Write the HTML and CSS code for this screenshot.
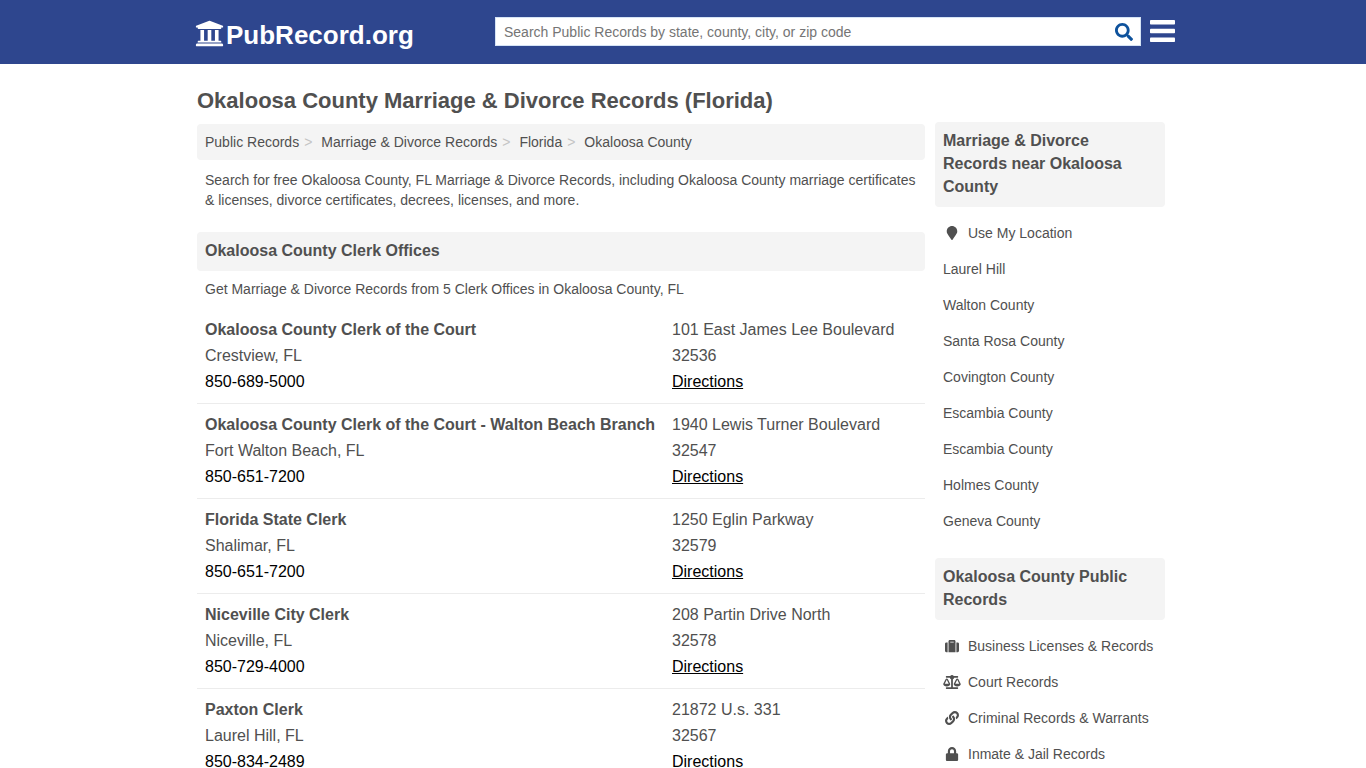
FILE: index.html
```html
<!DOCTYPE html>
<html lang="en">
<head>
<meta charset="utf-8">
<meta name="viewport" content="width=device-width, initial-scale=1">
<title>Okaloosa County Marriage &amp; Divorce Records (Florida)</title>
<link rel="stylesheet" href="styles.css">
</head>
<body>
<header class="site-header">
  <div class="container header-inner">
    <a class="logo" href="#">
      <svg class="logo-icon" viewBox="0 0 512 512" aria-hidden="true"><path d="M496 128v16a8 8 0 0 1-8 8h-24v12c0 6.627-5.373 12-12 12H60c-6.627 0-12-5.373-12-12v-12H24a8 8 0 0 1-8-8v-16a8 8 0 0 1 4.941-7.392l232-88a7.996 7.996 0 0 1 6.118 0l232 88A8 8 0 0 1 496 128zm-24 304H40c-13.255 0-24 10.745-24 24v16a8 8 0 0 0 8 8h464a8 8 0 0 0 8-8v-16c0-13.255-10.745-24-24-24zM96 192v192H60c-6.627 0-12 5.373-12 12v20h416v-20c0-6.627-5.373-12-12-12h-36V192h-64v192h-64V192h-64v192h-64V192H96z"/></svg>
      <span>PubRecord.org</span>
    </a>
    <form class="search" role="search">
      <input class="search-input" type="text" aria-label="Search public records" placeholder="Search Public Records by state, county, city, or zip code">
      <button class="search-button" type="button" aria-label="Search">
        <svg class="search-icon" viewBox="0 0 512 512" aria-hidden="true"><path d="M505 442.7L405.3 343c-4.5-4.5-10.6-7-17-7H372c27.6-35.3 44-79.7 44-128C416 93.1 322.9 0 208 0S0 93.1 0 208s93.1 208 208 208c48.3 0 92.7-16.4 128-44v16.3c0 6.4 2.5 12.5 7 17l99.7 99.7c9.4 9.4 24.6 9.4 33.9 0l28.3-28.3c9.4-9.4 9.4-24.6.1-34zM208 336c-70.7 0-128-57.2-128-128 0-70.7 57.2-128 128-128 70.7 0 128 57.2 128 128 0 70.7-57.2 128-128 128z"/></svg>
      </button>
    </form>
    <button class="menu-button" type="button" aria-label="Menu">
      <svg class="menu-icon" viewBox="0 0 25 22" aria-hidden="true"><rect width="25" height="4.6" rx=".8"/><rect y="8.7" width="25" height="4.6" rx=".8"/><rect y="17.4" width="25" height="4.6" rx=".8"/></svg>
    </button>
  </div>
</header>

<div class="container page">
  <main class="main">
    <h1 class="page-title">Okaloosa County Marriage &amp; Divorce Records (Florida)</h1>
    <nav aria-label="Breadcrumb">
      <ol class="breadcrumb">
        <li><a href="#">Public Records</a></li>
        <li><a href="#">Marriage &amp; Divorce Records</a></li>
        <li><a href="#">Florida</a></li>
        <li><a href="#">Okaloosa County</a></li>
      </ol>
    </nav>
    <p class="intro">Search for free Okaloosa County, FL Marriage &amp; Divorce Records, including Okaloosa County marriage certificates &amp; licenses, divorce certificates, decrees, licenses, and more.</p>
    <section class="offices">
      <h2 class="section-title">Okaloosa County Clerk Offices</h2>
      <p class="intro">Get Marriage &amp; Divorce Records from 5 Clerk Offices in Okaloosa County, FL</p>
      <ul class="office-list">
        <li class="office">
          <div><strong>Okaloosa County Clerk of the Court</strong><span>Crestview, FL</span><a class="phone" href="tel:850-689-5000">850-689-5000</a></div>
          <div><span>101 East James Lee Boulevard</span><span>32536</span><a class="directions" href="#">Directions</a></div>
        </li>
        <li class="office">
          <div><strong>Okaloosa County Clerk of the Court - Walton Beach Branch</strong><span>Fort Walton Beach, FL</span><a class="phone" href="tel:850-651-7200">850-651-7200</a></div>
          <div><span>1940 Lewis Turner Boulevard</span><span>32547</span><a class="directions" href="#">Directions</a></div>
        </li>
        <li class="office">
          <div><strong>Florida State Clerk</strong><span>Shalimar, FL</span><a class="phone" href="tel:850-651-7200">850-651-7200</a></div>
          <div><span>1250 Eglin Parkway</span><span>32579</span><a class="directions" href="#">Directions</a></div>
        </li>
        <li class="office">
          <div><strong>Niceville City Clerk</strong><span>Niceville, FL</span><a class="phone" href="tel:850-729-4000">850-729-4000</a></div>
          <div><span>208 Partin Drive North</span><span>32578</span><a class="directions" href="#">Directions</a></div>
        </li>
        <li class="office">
          <div><strong>Paxton Clerk</strong><span>Laurel Hill, FL</span><a class="phone" href="tel:850-834-2489">850-834-2489</a></div>
          <div><span>21872 U.s. 331</span><span>32567</span><a class="directions" href="#">Directions</a></div>
        </li>
      </ul>
    </section>
  </main>

  <aside class="sidebar">
    <section>
      <h2 class="section-title">Marriage &amp; Divorce Records near Okaloosa County</h2>
      <ul class="side-list">
        <li><a href="#"><svg class="side-icon" viewBox="0 0 384 512" aria-hidden="true"><path d="M172.268 501.67C26.97 291.031 0 269.413 0 192 0 85.961 85.961 0 192 0s192 85.961 192 192c0 77.413-26.97 99.031-172.268 309.67-9.535 13.774-29.93 13.773-39.464 0z"/></svg>Use My Location</a></li>
        <li><a href="#">Laurel Hill</a></li>
        <li><a href="#">Walton County</a></li>
        <li><a href="#">Santa Rosa County</a></li>
        <li><a href="#">Covington County</a></li>
        <li><a href="#">Escambia County</a></li>
        <li><a href="#">Escambia County</a></li>
        <li><a href="#">Holmes County</a></li>
        <li><a href="#">Geneva County</a></li>
      </ul>
    </section>
    <section>
      <h2 class="section-title">Okaloosa County Public Records</h2>
      <ul class="side-list">
        <li><a href="#"><svg class="side-icon" viewBox="0 0 512 512" aria-hidden="true"><path d="M128 480h256V80c0-26.500-21.500-48-48-48H176c-26.500 0-48 21.500-48 48v400zm64-384h128v32H192V96zm320 80v256c0 26.500-21.500 48-48 48h-48V128h48c26.500 0 48 21.500 48 48zM96 480H48c-26.500 0-48-21.500-48-48V176c0-26.500 21.500-48 48-48h48v352z"/></svg>Business Licenses &amp; Records</a></li>
        <li><a href="#"><svg class="side-icon" viewBox="0 0 640 512" aria-hidden="true"><path d="M256 336h-.02c0-16.18 1.34-8.73-85.05-181.51-17.65-35.29-68.19-35.36-85.87 0C-2.06 328.75.02 320.33.02 336H0c0 44.18 57.31 80 128 80s128-35.82 128-80zM128 176l72 144H56l72-144zm511.98 160c0-16.18 1.34-8.73-85.05-181.51-17.65-35.29-68.19-35.36-85.87 0-87.12 174.26-85.04 165.84-85.04 181.51H384c0 44.18 57.31 80 128 80s128-35.82 128-80h-.02zM440 320l72-144 72 144H440zm88 128H352V153.25c23.51-10.29 41.16-31.48 46.39-57.25H528c8.84 0 16-7.16 16-16V48c0-8.84-7.16-16-16-16H383.64C369.04 12.68 346.09 0 320 0s-49.04 12.68-63.64 32H112c-8.84 0-16 7.16-16 16v32c0 8.84 7.16 16 16 16h129.61c5.23 25.76 22.87 46.96 46.39 57.25V448H112c-8.84 0-16 7.16-16 16v32c0 8.84 7.16 16 16 16h416c8.84 0 16-7.16 16-16v-32c0-8.84-7.16-16-16-16z"/></svg>Court Records</a></li>
        <li><a href="#"><svg class="side-icon" viewBox="0 0 512 512" aria-hidden="true"><path d="M326.612 185.391c59.747 59.809 58.927 155.698.36 214.59-.11.12-.24.25-.36.37l-67.2 67.2c-59.27 59.27-155.699 59.262-214.96 0-59.27-59.26-59.27-155.7 0-214.96l37.106-37.106c9.84-9.84 26.786-3.3 27.294 10.606.648 17.722 3.826 35.527 9.69 52.721 1.986 5.822.567 12.262-3.783 16.612l-13.087 13.087c-28.026 28.026-28.905 73.66-1.155 101.96 28.024 28.579 74.086 28.749 102.325.51l67.2-67.19c28.191-28.191 28.073-73.757 0-101.83-3.701-3.694-7.429-6.564-10.341-8.569a16.037 16.037 0 0 1-6.947-12.606c-.396-10.567 3.348-21.456 11.698-29.806l21.054-21.055c5.521-5.521 14.182-6.199 20.584-1.731a152.482 152.482 0 0 1 20.522 17.197zM467.547 44.449c-59.261-59.262-155.69-59.27-214.96 0l-67.2 67.2c-.12.12-.25.25-.36.37-58.566 58.892-59.387 154.781.36 214.59a152.454 152.454 0 0 0 20.521 17.196c6.402 4.468 15.064 3.789 20.584-1.731l21.054-21.055c8.35-8.35 12.094-19.239 11.698-29.806a16.037 16.037 0 0 0-6.947-12.606c-2.912-2.005-6.64-4.875-10.341-8.569-28.073-28.073-28.191-73.639 0-101.83l67.2-67.19c28.239-28.239 74.3-28.069 102.325.51 27.75 28.3 26.872 73.934-1.155 101.96l-13.087 13.087c-4.35 4.35-5.769 10.79-3.783 16.612 5.864 17.194 9.042 34.999 9.69 52.721.509 13.906 17.454 20.446 27.294 10.606l37.106-37.106c59.271-59.259 59.271-155.699.001-214.959z"/></svg>Criminal Records &amp; Warrants</a></li>
        <li><a href="#"><svg class="side-icon" viewBox="0 0 448 512" aria-hidden="true"><path d="M400 224h-24v-72C376 68.2 307.8 0 224 0S72 68.2 72 152v72H48c-26.500 0-48 21.500-48 48v192c0 26.500 21.500 48 48 48h352c26.500 0 48-21.500 48-48V272c0-26.500-21.500-48-48-48zm-104 0H152v-72c0-39.700 32.300-72 72-72s72 32.300 72 72v72z"/></svg>Inmate &amp; Jail Records</a></li>
      </ul>
    </section>
  </aside>
</div>
</body>
</html>
```
FILE: styles.css
```css
* {
  box-sizing: border-box;
}

body {
  margin: 0;
  background: #fff;
  color: #505050;
  font-family: "Liberation Sans", Arial, sans-serif;
  font-size: 14px;
  line-height: 20px;
}

h1, h2, p, ul, ol {
  margin: 0;
  padding: 0;
}

ul, ol {
  list-style: none;
}

a {
  color: inherit;
  text-decoration: none;
}

svg {
  display: block;
  fill: currentColor;
}

button {
  padding: 0;
  border: 0;
  background: none;
  cursor: pointer;
}

.container {
  max-width: 976px;
  margin: 0 auto;
}

/* Header */
.site-header {
  background: #2e468e;
}

.header-inner {
  display: flex;
  align-items: flex-start;
  min-height: 64px;
}

.logo {
  display: flex;
  flex: 0 0 300px;
  gap: 2px;
  padding-top: 19px;
  color: #fff;
  font-size: 26px;
  font-weight: bold;
  line-height: 32px;
}

.logo-icon {
  width: 29px;
  height: 29px;
}

.search {
  display: flex;
  flex: 1;
  height: 29px;
  margin-top: 17px;
  background: #fff;
  border: 1px solid #d5e3f5;
}

.search-input {
  flex: 1;
  min-width: 0;
  padding: 0 8px;
  border: 0;
  background: transparent;
  color: #505050;
  font: inherit;
}

.search-input::placeholder {
  color: #757575;
}

.search-button {
  display: flex;
  align-items: center;
  padding: 0 7px;
  color: #0e529c;
}

.search-icon {
  width: 18px;
  height: 18px;
}

.menu-button {
  margin: 20px -4px 0 9px;
  color: #fff;
}

.menu-icon {
  width: 25px;
  height: 22px;
}

/* Page columns */
.page {
  display: grid;
  grid-template-columns: 1fr 230px;
  gap: 10px;
  padding: 0 6px 24px 2px;
}

.page-title {
  padding: 25px 0 11px;
  font-size: 22px;
  line-height: 24px;
}

.breadcrumb {
  display: flex;
  flex-wrap: wrap;
  padding: 8px;
  border-radius: 4px;
  background: #f4f4f4;
}

.breadcrumb li + li::before {
  content: ">";
  padding: 0 9px 0 5px;
  color: #c4c4c4;
}

.intro {
  padding: 10px 8px;
}

.section-title {
  padding: 7px 8px 9px;
  border-radius: 4px;
  background: #f4f4f4;
  font-size: 16px;
  line-height: 23px;
}

.offices {
  margin-top: 12px;
}

.offices .intro {
  padding-top: 8px;
}

.office {
  display: grid;
  grid-template-columns: 1fr 245px;
  padding: 8px;
  border-bottom: 1px solid #ececec;
  font-size: 16px;
  line-height: 26px;
}

.office strong,
.office span,
.office a {
  display: block;
  width: fit-content;
}

.phone,
.directions {
  color: #000;
}

.directions {
  text-decoration: underline;
}

/* Sidebar */
.sidebar {
  padding-top: 58px;
}

.side-list {
  padding: 8px 8px 19px;
}

.side-list a {
  display: flex;
  align-items: center;
  gap: 7px;
  padding: 8px 0;
}

.side-icon {
  width: 18px;
  height: 14px;
}
```
